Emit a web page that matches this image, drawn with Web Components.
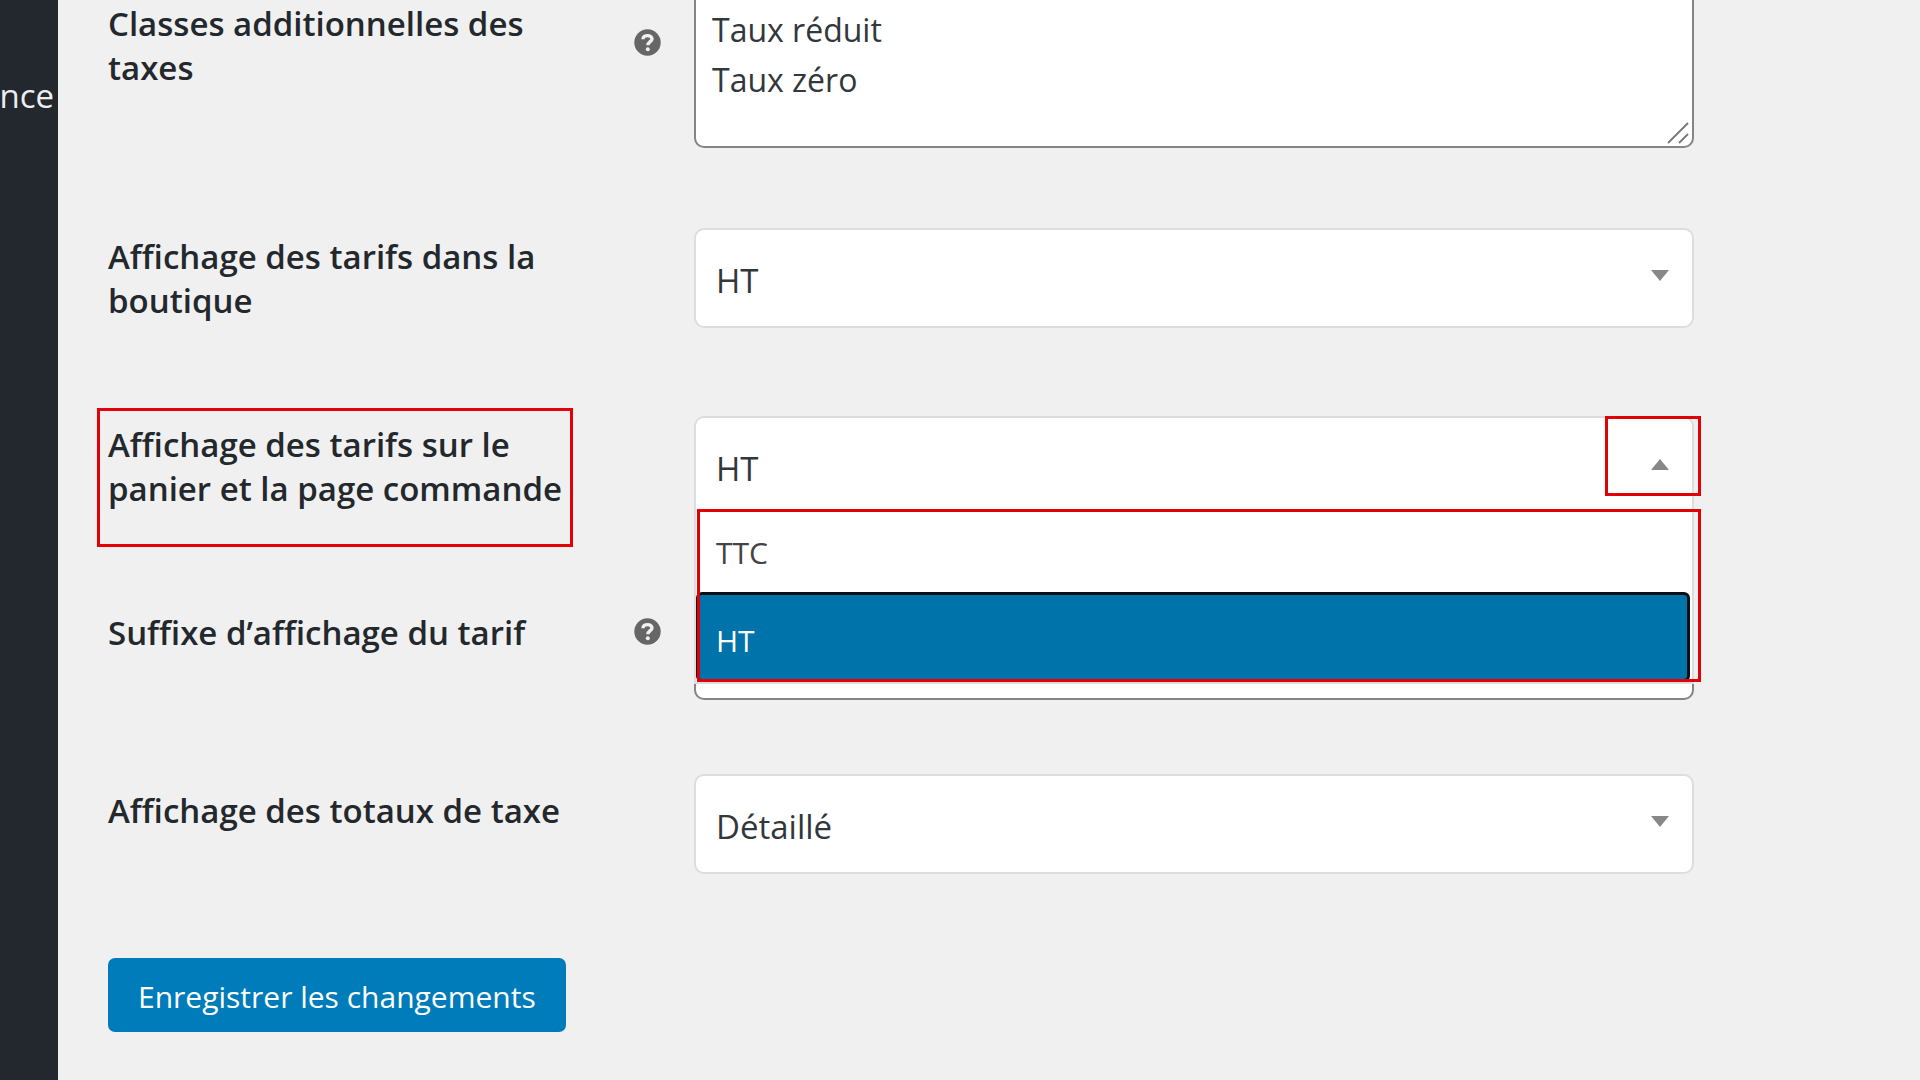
<!DOCTYPE html>
<html lang="fr">
<head>
<meta charset="utf-8">
<title>Réglages des taxes</title>
<style>
  html, body { margin: 0; min-height: 100%; background: #f0f0f0; }
  body { font-family: "Open Sans", "Noto Sans", sans-serif; color: #23282d; }
</style>
</head>
<body>
<admin-shell>
  <admin-menu slot="menu">nce</admin-menu>
  <setting-textarea label="Classes additionnelles des taxes" help first>Taux réduit
Taux zéro</setting-textarea>
  <setting-select label="Affichage des tarifs dans la boutique" value="HT"></setting-select>
  <setting-select label="Affichage des tarifs sur le panier et la page commande" value="HT" options="TTC,HT" open marked></setting-select>
  <setting-input label="Suffixe d’affichage du tarif" help></setting-input>
  <setting-select label="Affichage des totaux de taxe" value="Détaillé" last></setting-select>
  <save-button>Enregistrer les changements</save-button>
</admin-shell>

<script>
class AdminShell extends HTMLElement {
  connectedCallback() {
    this.attachShadow({ mode: "open" }).innerHTML = `
      <style>
        :host { display: grid; grid-template-columns: 58px 1fr; height: 100vh; overflow: hidden; }
        main { padding: 0 226px 0 50px; min-width: 0; }
      </style>
      <slot name="menu"></slot>
      <main><slot></slot></main>`;
  }
}

class AdminMenu extends HTMLElement {
  connectedCallback() {
    this.attachShadow({ mode: "open" }).innerHTML = `
      <style>
        :host { display: block; background: #23272e; color: #eee; }
        nav { display: flex; justify-content: flex-end; padding: 72px 4px 0 0; }
        a { color: inherit; text-decoration: none; font-size: 33px; line-height: 48px; }
      </style>
      <nav><a href="#"><slot></slot></a></nav>`;
  }
}

class RedFrame extends HTMLElement {
  connectedCallback() {
    this.attachShadow({ mode: "open" }).innerHTML = `
      <style>:host { display: block; position: absolute; z-index: 3; box-sizing: border-box; border: 3px solid #e30007; pointer-events: none; }</style>`;
  }
}

/* Shared row: label, optional help icon, then the control of the subclass. */
class SettingRow extends HTMLElement {
  connectedCallback() {
    const label = this.getAttribute("label");
    this.attachShadow({ mode: "open" }).innerHTML = `
      <style>
        :host { display: grid; grid-template-columns: 470px 116px minmax(0, 1fr); min-height: var(--row, 188px); }
        :host([first]) { --row: 228px; --top: 2px; --help: 29px; }
        :host([last]) { --row: 184px; --top: 15px; }
        .name { position: relative; align-self: start; padding-top: var(--top, 7px); }
        label { display: block; font-size: 33px; line-height: 44px; font-weight: 600; }
        .help { padding: var(--help, 14px) 0 0 56px; }
        .help svg { display: block; width: 27px; height: 27px; }
        .control { position: relative; align-self: start; }
        .field { display: block; box-sizing: border-box; width: 100%; margin: 0; font: inherit; font-size: 33px; color: #32373c; background: #fff; border-radius: 10px; outline: 0; }
        .name red-frame { inset: -8px 5px -36px -11px; }
        ${this.css()}
      </style>
      <div class="name"><label for="field">${label}</label>${this.hasAttribute("marked") ? "<red-frame></red-frame>" : ""}</div>
      <div class="help">${this.hasAttribute("help") ? `
        <svg viewBox="0 0 27 27" aria-hidden="true">
          <circle cx="13.5" cy="13.5" r="13.2" fill="#666"/>
          <path d="M9 10.3C9 7.7 11 6.6 13.6 6.6C16.2 6.6 18 8 18 10C18 12.6 13.9 12.8 13.9 16.2" fill="none" stroke="#f0f0f0" stroke-width="3.4"/>
          <circle cx="13.8" cy="20.3" r="2" fill="#f0f0f0"/>
        </svg>` : ""}</div>
      <div class="control">${this.control()}</div>`;
  }
}

class SettingTextarea extends SettingRow {
  css() {
    return `
      .field { height: 148px; padding: 5px 16px; font-size: 32px; line-height: 50px; border: 2px solid #858585; border-top: 0; border-radius: 0 0 10px 10px; resize: none; overflow: hidden; }
      .grip { position: absolute; right: 5px; bottom: 4px; width: 22px; height: 22px; }`;
  }
  control() {
    return `<textarea id="field" class="field">${this.textContent}</textarea>
      <svg class="grip" viewBox="0 0 22 22" aria-hidden="true"><path d="M1 21L21 1M12 21L21 12" stroke="#777" stroke-width="1.8" fill="none"/></svg>`;
  }
}

class SettingInput extends SettingRow {
  css() {
    return `
      :host { --row: 170px; }
      .field { height: 96px; padding: 0 16px; border: 2px solid #858585; }`;
  }
  control() { return `<input id="field" class="field" type="text">`; }
}

class SettingSelect extends SettingRow {
  css() {
    return `
      .field { height: 100px; padding: 4px 60px 0 20px; border: 2px solid #ddd; appearance: none; }
      .arrow { position: absolute; right: 24px; top: 42px; width: 20px; height: 12px; pointer-events: none; }
      :host([open]) .field { border-bottom-color: #fff; border-radius: 10px 10px 0 0; }
      .list { position: absolute; z-index: 2; top: 92px; left: 0; right: 0; margin: 0; padding: 0; list-style: none; background: #fff; border: 2px solid #ddd; border-top: 0; }
      .list li { box-sizing: border-box; height: 84px; padding: 18px 20px 0; font-size: 30px; line-height: 54px; color: #444; }
      .list li[aria-selected=true] { height: 90px; margin-right: 2px; padding: 19px 18px 0; background: #0073aa; color: #fff; border: 3px solid #0a0f12; border-left-width: 2px; border-radius: 6px; }
      .on-arrow { top: 0; right: -7px; width: 96px; height: 80px; }
      .on-list { top: 93px; left: 3px; right: -7px; height: 173px; }`;
  }
  control() {
    const value = this.getAttribute("value");
    const open = this.hasAttribute("open");
    const options = (this.getAttribute("options") || value).split(",");
    return `
      <select id="field" class="field">${options.map(o => `<option${o === value ? " selected" : ""}>${o}</option>`).join("")}</select>
      <svg class="arrow" viewBox="0 0 20 12" aria-hidden="true"><path d="${open ? "M1 12L10 1L19 12Z" : "M1 0L10 11L19 0Z"}" fill="#888"/></svg>
      ${open ? `<ul class="list" role="listbox" aria-label="${this.getAttribute("label")}">${options.map(o => `<li role="option" aria-selected="${o === value}">${o}</li>`).join("")}</ul>` : ""}
      ${this.hasAttribute("marked") ? `<red-frame class="on-arrow"></red-frame><red-frame class="on-list"></red-frame>` : ""}`;
  }
}

class SaveButton extends HTMLElement {
  connectedCallback() {
    this.attachShadow({ mode: "open" }).innerHTML = `
      <style>
        :host { display: flex; }
        button { height: 74px; margin: 0; padding: 2px 30px 0; border: 0; border-radius: 7px; background: #007cba; color: #fff; font: inherit; font-size: 30px; }
      </style>
      <button type="submit"><slot></slot></button>`;
  }
}

customElements.define("admin-shell", AdminShell);
customElements.define("admin-menu", AdminMenu);
customElements.define("red-frame", RedFrame);
customElements.define("setting-textarea", SettingTextarea);
customElements.define("setting-input", SettingInput);
customElements.define("setting-select", SettingSelect);
customElements.define("save-button", SaveButton);
</script>
</body>
</html>
